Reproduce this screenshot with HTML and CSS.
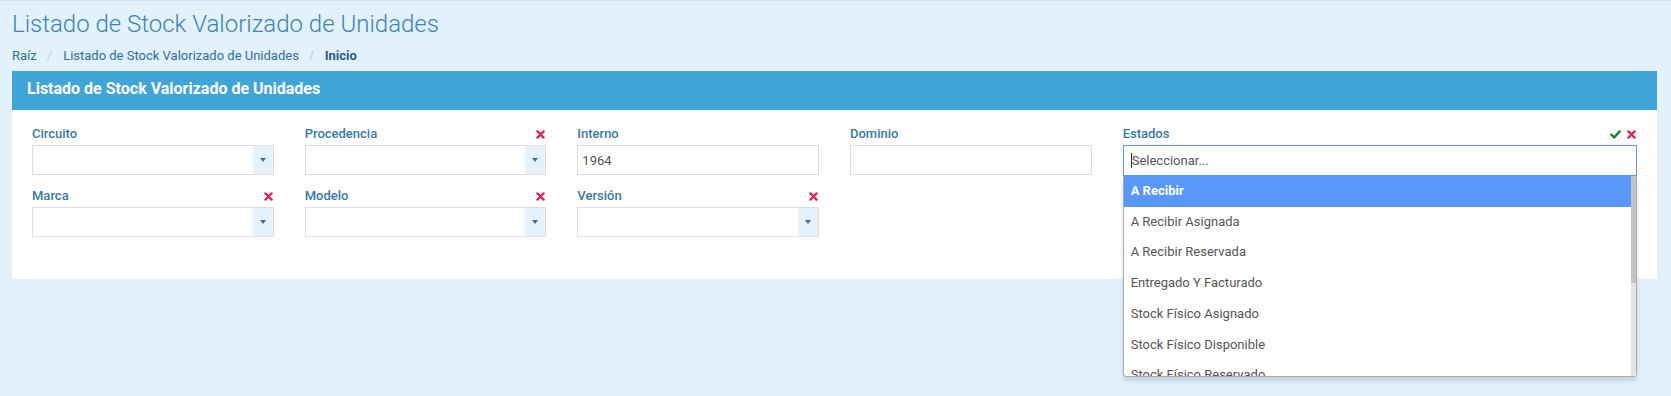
FILE: index.html
```html
<!DOCTYPE html>
<html lang="es">
<head>
    <meta charset="UTF-8">
    <meta name="viewport" content="width=device-width, initial-scale=1.0">
    <title>Listado de Stock Valorizado de Unidades</title>
    <link rel="stylesheet" href="styles.css">
</head>
<body>
    <div class="page">
        <h1 class="page-title">Listado de Stock Valorizado de Unidades</h1>
        <ol class="breadcrumb">
            <li><a href="#">Raíz</a></li>
            <li><a href="#">Listado de Stock Valorizado de Unidades</a></li>
            <li class="active">Inicio</li>
        </ol>

        <div class="panel">
            <div class="panel-heading">Listado de Stock Valorizado de Unidades</div>
            <div class="panel-body">
                <div class="filters">
                    <div class="field">
                        <div class="field-label"><span>Circuito</span></div>
                        <div class="select-box"><span class="value"></span><span class="arrow"><i class="caret"></i></span></div>
                    </div>
                    <div class="field">
                        <div class="field-label"><span>Procedencia</span>
                            <svg class="icon-clear" viewBox="0 0 10 10" width="9" height="9"><path d="M1.6 1.6l6.8 6.8M8.4 1.6l-6.8 6.8"/></svg>
                        </div>
                        <div class="select-box"><span class="value"></span><span class="arrow"><i class="caret"></i></span></div>
                    </div>
                    <div class="field">
                        <div class="field-label"><span>Interno</span></div>
                        <div class="text-box">1964</div>
                    </div>
                    <div class="field">
                        <div class="field-label"><span>Dominio</span></div>
                        <div class="text-box"></div>
                    </div>
                    <div class="field field-wide">
                        <div class="field-label"><span>Estados</span>
                            <span class="label-icons">
                                <svg class="icon-ok" viewBox="0 0 12 10" width="11" height="9"><path d="M1.4 5.2l3.1 3.1 6.1-6.8"/></svg>
                                <svg class="icon-clear" viewBox="0 0 10 10" width="9" height="9"><path d="M1.6 1.6l6.8 6.8M8.4 1.6l-6.8 6.8"/></svg>
                            </span>
                        </div>
                        <div class="multi-select">
                            <div class="search-box"><span class="cursor"></span>Seleccionar...</div>
                            <div class="dropdown">
                                <ul class="options">
                                    <li class="highlighted">A Recibir</li>
                                    <li>A Recibir Asignada</li>
                                    <li>A Recibir Reservada</li>
                                    <li>Entregado Y Facturado</li>
                                    <li>Stock Físico Asignado</li>
                                    <li>Stock Físico Disponible</li>
                                    <li>Stock Físico Reservado</li>
                                </ul>
                                <div class="scrollbar"><div class="thumb"></div></div>
                            </div>
                        </div>
                    </div>

                    <div class="field">
                        <div class="field-label"><span>Marca</span>
                            <svg class="icon-clear" viewBox="0 0 10 10" width="9" height="9"><path d="M1.6 1.6l6.8 6.8M8.4 1.6l-6.8 6.8"/></svg>
                        </div>
                        <div class="select-box"><span class="value"></span><span class="arrow"><i class="caret"></i></span></div>
                    </div>
                    <div class="field">
                        <div class="field-label"><span>Modelo</span>
                            <svg class="icon-clear" viewBox="0 0 10 10" width="9" height="9"><path d="M1.6 1.6l6.8 6.8M8.4 1.6l-6.8 6.8"/></svg>
                        </div>
                        <div class="select-box"><span class="value"></span><span class="arrow"><i class="caret"></i></span></div>
                    </div>
                    <div class="field">
                        <div class="field-label"><span>Versión</span>
                            <svg class="icon-clear" viewBox="0 0 10 10" width="9" height="9"><path d="M1.6 1.6l6.8 6.8M8.4 1.6l-6.8 6.8"/></svg>
                        </div>
                        <div class="select-box"><span class="value"></span><span class="arrow"><i class="caret"></i></span></div>
                    </div>
                </div>
            </div>
        </div>
    </div>
</body>
</html>
```

FILE: styles.css
```css
html {
    background: #e2f1fc;
}

body {
    margin: 0;
    min-height: 100vh;
    box-sizing: border-box;
    font-family: Roboto, "Noto Sans", Arial, sans-serif;
    font-size: 13px;
    color: #555;
    background: #e2f1fc;
    border-top: 1px solid #cfe0ec;
}

.page {
    padding: 0 14px 0 12px;
}

.page-title {
    margin: 0;
    padding-top: 10px;
    font-size: 24px;
    font-weight: 300;
    line-height: 26px;
    color: #3b84b8;
}

.breadcrumb {
    display: flex;
    list-style: none;
    margin: 10px 0 0;
    padding: 0;
    line-height: 18px;
}

.breadcrumb li + li:before {
    content: "/";
    color: #c9d3da;
    padding: 0 11px 0 10px;
}

.breadcrumb a {
    color: #2f6e9e;
    text-decoration: none;
}

.breadcrumb .active {
    color: #245f8c;
    font-weight: 700;
}

.panel {
    margin-top: 6px;
    background: #fff;
}

.panel-heading {
    height: 39px;
    box-sizing: border-box;
    padding: 0 15px 3px;
    line-height: 36px;
    font-size: 16px;
    font-weight: 700;
    color: #fff;
    background: #3fa4d8;
}

.panel-body {
    padding: 15px 20px 42px;
}

/* filter grid: 6 columns, Estados takes two */
.filters {
    display: grid;
    grid-template-columns: repeat(6, 1fr);
    column-gap: 31px;
    row-gap: 12px;
}

.field-wide {
    grid-column: span 2;
}

.field-label {
    display: flex;
    justify-content: space-between;
    align-items: center;
    height: 18px;
    line-height: 18px;
    margin-bottom: 2px;
    padding-right: 1px;
    font-weight: 500;
    color: #3a78a8;
}

.label-icons {
    display: flex;
    align-items: center;
    gap: 6px;
}

.icon-clear path {
    fill: none;
    stroke: #e2225c;
    stroke-width: 2.6;
    stroke-linecap: round;
}

.icon-ok path {
    fill: none;
    stroke: #1d7a2b;
    stroke-width: 2.6;
    stroke-linecap: round;
}

.select-box,
.text-box {
    display: flex;
    height: 30px;
    box-sizing: border-box;
    border: 1px solid #dedede;
}

.text-box {
    align-items: center;
    padding: 0 4px;
}

.select-box .value {
    flex: 1;
}

.select-box .arrow {
    display: flex;
    align-items: center;
    justify-content: center;
    width: 20px;
    background: #e4f2fd;
}

.caret {
    width: 0;
    height: 0;
    border-left: 3.5px solid transparent;
    border-right: 3.5px solid transparent;
    border-top: 4px solid #3a6d9b;
}

.multi-select {
    position: relative;
}

.search-box {
    display: flex;
    align-items: center;
    height: 31px;
    box-sizing: border-box;
    margin-bottom: -1px;
    padding: 0 7px;
    border: 1px solid #5897fb;
    color: #555;
}

.cursor {
    width: 1px;
    height: 15px;
    background: #333;
}

/* open select2 results */
.dropdown {
    position: absolute;
    top: 31px;
    left: 0;
    right: 0;
    display: flex;
    background: #fff;
    border: 1px solid #aaa;
    border-top: 0;
    border-radius: 0 0 4px 4px;
    box-shadow: 0 4px 5px rgba(0, 0, 0, 0.12);
    z-index: 10;
}

.options {
    flex: 1;
    height: 200px;
    overflow: hidden;
    list-style: none;
    margin: 0;
    padding: 0;
}

.options li {
    padding: 0 7px;
    line-height: 30.7px;
}

.options li.highlighted {
    background: #5897fb;
    color: #fff;
    font-weight: 700;
}

.scrollbar {
    width: 5px;
    background: #e4e4e4;
}

.scrollbar .thumb {
    height: 107px;
    background: #c3c3c3;
}
```
